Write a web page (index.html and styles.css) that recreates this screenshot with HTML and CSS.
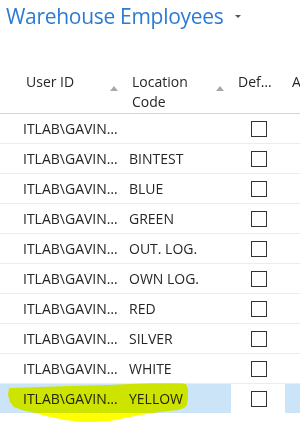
FILE: index.html
```html
<!DOCTYPE html>
<html lang="en">

<head>
    <meta charset="UTF-8" />
    <title>Warehouse Employees</title>
    <link rel="stylesheet" href="styles.css">
</head>

<body>

    <div class="page-title">
        <h1>Warehouse Employees</h1>
        <span class="title-caret"></span>
    </div>

    <div class="list">
        <div class="list-header">
            <div class="hcell col-user">User ID<span class="sort-arrow"></span></div>
            <div class="hcell col-loc">Location<br>Code<span class="sort-arrow"></span></div>
            <div class="hcell col-def">Def…</div>
            <div class="hcell col-more">A</div>
        </div>

        <div class="row">
            <div class="cell col-user">ITLAB\GAVIN…</div>
            <div class="cell col-loc"></div>
            <div class="cell col-def"><span class="check"></span></div>
            <div class="cell col-more"></div>
        </div>
        <div class="row">
            <div class="cell col-user">ITLAB\GAVIN…</div>
            <div class="cell col-loc">BINTEST</div>
            <div class="cell col-def"><span class="check"></span></div>
            <div class="cell col-more"></div>
        </div>
        <div class="row">
            <div class="cell col-user">ITLAB\GAVIN…</div>
            <div class="cell col-loc">BLUE</div>
            <div class="cell col-def"><span class="check"></span></div>
            <div class="cell col-more"></div>
        </div>
        <div class="row">
            <div class="cell col-user">ITLAB\GAVIN…</div>
            <div class="cell col-loc">GREEN</div>
            <div class="cell col-def"><span class="check"></span></div>
            <div class="cell col-more"></div>
        </div>
        <div class="row">
            <div class="cell col-user">ITLAB\GAVIN…</div>
            <div class="cell col-loc">OUT. LOG.</div>
            <div class="cell col-def"><span class="check"></span></div>
            <div class="cell col-more"></div>
        </div>
        <div class="row">
            <div class="cell col-user">ITLAB\GAVIN…</div>
            <div class="cell col-loc">OWN LOG.</div>
            <div class="cell col-def"><span class="check"></span></div>
            <div class="cell col-more"></div>
        </div>
        <div class="row">
            <div class="cell col-user">ITLAB\GAVIN…</div>
            <div class="cell col-loc">RED</div>
            <div class="cell col-def"><span class="check"></span></div>
            <div class="cell col-more"></div>
        </div>
        <div class="row">
            <div class="cell col-user">ITLAB\GAVIN…</div>
            <div class="cell col-loc">SILVER</div>
            <div class="cell col-def"><span class="check"></span></div>
            <div class="cell col-more"></div>
        </div>
        <div class="row">
            <div class="cell col-user">ITLAB\GAVIN…</div>
            <div class="cell col-loc">WHITE</div>
            <div class="cell col-def"><span class="check"></span></div>
            <div class="cell col-more"></div>
        </div>
        <div class="row selected">
            <div class="cell col-user">ITLAB\GAVIN…</div>
            <div class="cell col-loc">YELLOW</div>
            <div class="cell col-def"><span class="check"></span></div>
            <div class="cell col-more"></div>

            <!-- marcador amarelo por cima da linha -->
            <svg class="marker" width="190" height="46" viewBox="0 0 190 46">
                <path d="M9 5 L40 4 L70 3 L110 2 L150 0 L178 -1 L186 1 L188 6 L188 14 L187 22 L184 25 L178 27 L160 29 L140 32 L125 35 L110 38 L95 39 L80 39 L65 37 L50 34 L35 30 L22 27 L14 24 L10 19 L8 12 Z" fill="#ffff00" />
            </svg>
        </div>
    </div>

</body>

</html>
```

FILE: styles.css
```css
body {
    margin: 0;
    font-family: "Open Sans", "Noto Sans", sans-serif;
    color: #262626;
    background: #fff;
    width: 300px;
    min-height: 434px;
    overflow: hidden;
}

.page-title {
    display: flex;
    align-items: center;
    padding: 0 0 0 6px;
    height: 32px;
}

.page-title h1 {
    margin: 0;
    font-size: 21px;
    letter-spacing: -0.3px;
    font-weight: normal;
    color: #2b7bd4;
    line-height: 30px;
    white-space: nowrap;
}

.title-caret {
    margin-left: 12px;
    width: 0;
    height: 0;
    border-left: 3px solid transparent;
    border-right: 3px solid transparent;
    border-top: 3px solid #555;
}

.list {
    margin-top: 40px;
}

.list-header,
.row {
    display: grid;
    grid-template-columns: 125px 106px 54px 1fr;
}

.list-header {
    height: 41px;
    border-bottom: 1px solid #d6d6d6;
    font-size: 14px;
    line-height: 20px;
}

.hcell {
    position: relative;
    white-space: nowrap;
    overflow: hidden;
}

.hcell.col-user { padding-left: 26px; }
.hcell.col-loc { padding-left: 7px; }
.hcell.col-def { padding-left: 7px; }
.hcell.col-more { padding-left: 7px; }

.sort-arrow {
    position: absolute;
    right: 7px;
    top: 14px;
    width: 0;
    height: 0;
    border-left: 4px solid transparent;
    border-right: 4px solid transparent;
    border-bottom: 5px solid #a8a8a8;
}

.row {
    height: 29px;
    border-bottom: 1px solid #ececec;
    font-size: 14px;
    align-items: center;
    position: relative;
}

.cell {
    white-space: nowrap;
    overflow: hidden;
}

.cell.col-user { padding-left: 23px; }
.cell.col-loc { padding-left: 4px; }
.cell.col-def {
    display: flex;
    justify-content: center;
    padding-left: 2px;
}

.check {
    display: block;
    width: 14px;
    height: 14px;
    border: 1.5px solid #333;
}

.row.selected {
    background: #cce4f7;
    border-bottom-color: #fff;
}

.row.selected .cell.col-def {
    background: #fff;
    height: 100%;
    align-items: center;
}

.marker {
    position: absolute;
    left: 0;
    top: -1px;
    mix-blend-mode: multiply;
}
```
